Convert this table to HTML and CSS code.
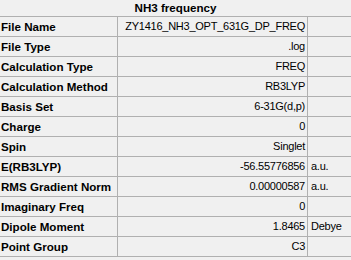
FILE: index.html
```html
<!DOCTYPE html>
<html>
<head>
<meta charset="utf-8">
<link rel="stylesheet" href="styles.css">
</head>
<body>
<div class="panel">
  <div class="title">NH3 frequency</div>
  <div class="grid">
    <div class="key">File Name</div><div class="val">ZY1416_NH3_OPT_631G_DP_FREQ</div><div class="unit"></div>
    <div class="key">File Type</div><div class="val">.log</div><div class="unit"></div>
    <div class="key">Calculation Type</div><div class="val">FREQ</div><div class="unit"></div>
    <div class="key">Calculation Method</div><div class="val">RB3LYP</div><div class="unit"></div>
    <div class="key">Basis Set</div><div class="val">6-31G(d,p)</div><div class="unit"></div>
    <div class="key">Charge</div><div class="val">0</div><div class="unit"></div>
    <div class="key">Spin</div><div class="val">Singlet</div><div class="unit"></div>
    <div class="key">E(RB3LYP)</div><div class="val">-56.55776856</div><div class="unit">a.u.</div>
    <div class="key">RMS Gradient Norm</div><div class="val">0.00000587</div><div class="unit">a.u.</div>
    <div class="key">Imaginary Freq</div><div class="val">0</div><div class="unit"></div>
    <div class="key">Dipole Moment</div><div class="val">1.8465</div><div class="unit">Debye</div>
    <div class="key last">Point Group</div><div class="val last">C3</div><div class="unit last"></div>
  </div>
</div>
</body>
</html>
```
FILE: styles.css
```css
html, body {
  margin: 0;
  padding: 0;
  background: #f0f0f0;
}

.panel {
  width: 351px;
  height: 260px;
  font-family: "Liberation Sans", Arial, sans-serif;
  font-size: 11px;
  color: #000;
}

.title {
  height: 16px;
  line-height: 16px;
  text-align: center;
  font-weight: bold;
  font-size: 11.6px;
}

.grid {
  display: grid;
  grid-template-columns: 118px 190px 1fr;
  grid-auto-rows: 20px;
}

.grid > div {
  box-sizing: border-box;
  border-top: 1px solid #b0b0b0;
  line-height: 19px;
  white-space: nowrap;
  overflow: hidden;
}

.grid > .last {
  height: 21px;
  border-bottom: 1px solid #b0b0b0;
}

.key {
  font-weight: bold;
  font-size: 11.6px;
  padding-left: 1px;
  border-right: 1px solid #b0b0b0;
}

.val {
  text-align: right;
  padding-right: 2px;
  letter-spacing: -0.25px;
  border-right: 1px solid #b0b0b0;
}

.unit {
  padding-left: 3px;
  letter-spacing: -0.25px;
}
```
